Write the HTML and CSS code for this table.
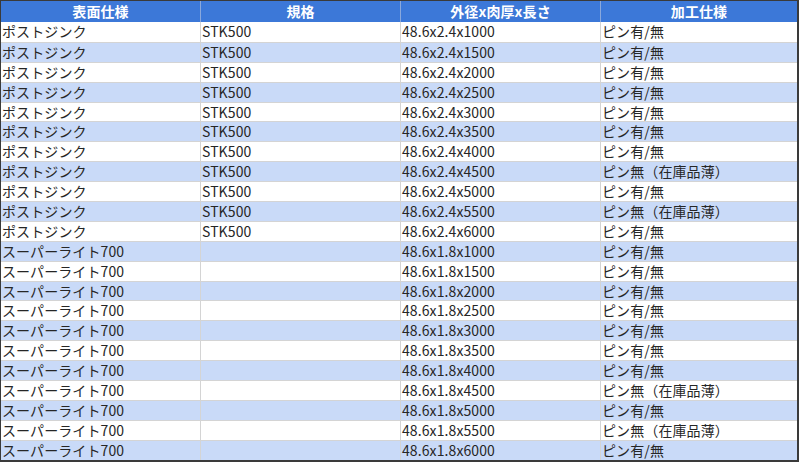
FILE: index.html
```html
<!DOCTYPE html>
<html lang="ja">
<head>
<meta charset="utf-8">
<link rel="stylesheet" href="styles.css">
</head>
<body>
<div class="sheet">
  <div class="row head"><div>表面仕様</div><div>規格</div><div>外径x肉厚x長さ</div><div>加工仕様</div></div>
  <div class="row"><div>ポストジンク</div><div>STK500</div><div>48.6x2.4x1000</div><div>ピン有/無</div></div>
  <div class="row alt"><div>ポストジンク</div><div>STK500</div><div>48.6x2.4x1500</div><div>ピン有/無</div></div>
  <div class="row"><div>ポストジンク</div><div>STK500</div><div>48.6x2.4x2000</div><div>ピン有/無</div></div>
  <div class="row alt"><div>ポストジンク</div><div>STK500</div><div>48.6x2.4x2500</div><div>ピン有/無</div></div>
  <div class="row"><div>ポストジンク</div><div>STK500</div><div>48.6x2.4x3000</div><div>ピン有/無</div></div>
  <div class="row alt"><div>ポストジンク</div><div>STK500</div><div>48.6x2.4x3500</div><div>ピン有/無</div></div>
  <div class="row"><div>ポストジンク</div><div>STK500</div><div>48.6x2.4x4000</div><div>ピン有/無</div></div>
  <div class="row alt"><div>ポストジンク</div><div>STK500</div><div>48.6x2.4x4500</div><div>ピン無（在庫品薄）</div></div>
  <div class="row"><div>ポストジンク</div><div>STK500</div><div>48.6x2.4x5000</div><div>ピン有/無</div></div>
  <div class="row alt"><div>ポストジンク</div><div>STK500</div><div>48.6x2.4x5500</div><div>ピン無（在庫品薄）</div></div>
  <div class="row"><div>ポストジンク</div><div>STK500</div><div>48.6x2.4x6000</div><div>ピン有/無</div></div>
  <div class="row alt"><div>スーパーライト700</div><div></div><div>48.6x1.8x1000</div><div>ピン有/無</div></div>
  <div class="row"><div>スーパーライト700</div><div></div><div>48.6x1.8x1500</div><div>ピン有/無</div></div>
  <div class="row alt"><div>スーパーライト700</div><div></div><div>48.6x1.8x2000</div><div>ピン有/無</div></div>
  <div class="row"><div>スーパーライト700</div><div></div><div>48.6x1.8x2500</div><div>ピン有/無</div></div>
  <div class="row alt"><div>スーパーライト700</div><div></div><div>48.6x1.8x3000</div><div>ピン有/無</div></div>
  <div class="row"><div>スーパーライト700</div><div></div><div>48.6x1.8x3500</div><div>ピン有/無</div></div>
  <div class="row alt"><div>スーパーライト700</div><div></div><div>48.6x1.8x4000</div><div>ピン有/無</div></div>
  <div class="row"><div>スーパーライト700</div><div></div><div>48.6x1.8x4500</div><div>ピン無（在庫品薄）</div></div>
  <div class="row alt"><div>スーパーライト700</div><div></div><div>48.6x1.8x5000</div><div>ピン有/無</div></div>
  <div class="row"><div>スーパーライト700</div><div></div><div>48.6x1.8x5500</div><div>ピン無（在庫品薄）</div></div>
  <div class="row alt"><div>スーパーライト700</div><div></div><div>48.6x1.8x6000</div><div>ピン有/無</div></div>
</div>
</body>
</html>
```
FILE: styles.css
```css
html, body {
  margin: 0;
  padding: 0;
  background: #ffffff;
}
body {
  font-family: "Noto Sans CJK JP", "Noto Sans", sans-serif;
  font-size: 14px;
  color: #262626;
}
.sheet {
  width: 799px;
  border: 1px solid #3a3a3a;
  border-width: 1px 2px 2px 1px;
  box-sizing: border-box;
}
.row {
  display: grid;
  grid-template-columns: 199px 200px 200px 1fr;
  height: 19.9px;
  background: #ffffff;
  border-top: 1px solid #d4d4d4;
  box-sizing: border-box;
}
.row:nth-child(2) {
  border-top: none;
}
.row.alt {
  background: #c9daf8;
}
.row > div {
  padding-left: 1px;
  line-height: 19px;
  white-space: nowrap;
  overflow: hidden;
  border-left: 1px solid #d4d4d4;
  letter-spacing: 0.1px;
}
.row > div:first-child {
  border-left: none;
}
.row.head {
  height: 21px;
  background: #3c78d8;
  color: #ffffff;
  font-weight: bold;
  border-top: none;
}
.row.head > div {
  text-align: center;
  padding-left: 0;
  line-height: 21px;
  border-left-color: #8aa8dc;
}
```
